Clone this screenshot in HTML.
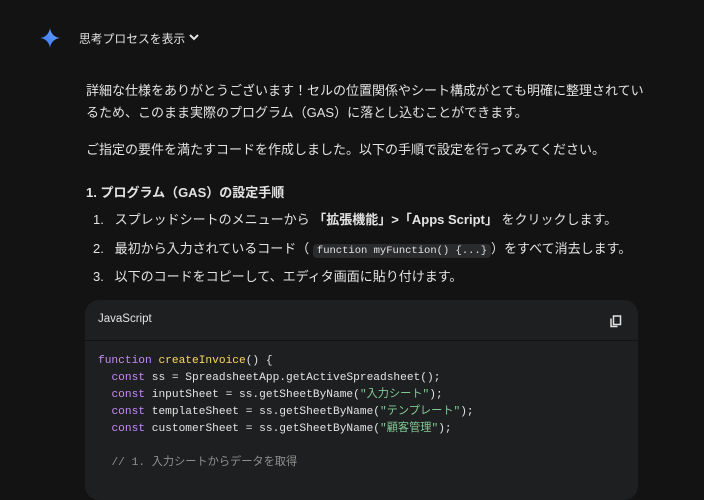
<!DOCTYPE html><html><head><meta charset="utf-8"><style>
body{margin:0;background:#131314;width:704px;height:463px;overflow:hidden;font-family:"Liberation Sans","Noto Sans CJK JP",sans-serif;color:#e3e3e3;position:relative}
.a{position:absolute;white-space:nowrap}
.t{font-size:13px;letter-spacing:0}
code{font-family:"Liberation Mono","Noto Sans CJK JP",monospace}
.ic{background:#2a2b2d;border-radius:4px;padding:1px 4px;font-size:10.5px}
.box{position:absolute;left:85px;top:300px;width:553px;height:200px;background:#1e1f20;border-radius:14px}
.hd{position:absolute;left:85px;top:300px;width:553px;height:40px;border-bottom:1px solid #131314}
pre{margin:0;position:absolute;left:98px;top:353px;font-family:"Liberation Mono","Noto Sans CJK JP",monospace;font-size:11.2px;line-height:17px;color:#e3e3e3}
.k{color:#c58af9}.f{color:#fdd663}.s{color:#81c995}.c{color:#8e918f}
</style></head><body>
<svg class="a" style="left:40px;top:28px" width="20" height="20" viewBox="0 0 20 20"><defs><linearGradient id="g" x1="0" y1="1" x2="1" y2="0"><stop offset="0" stop-color="#2f6ff0"/><stop offset="1" stop-color="#6fa8ff"/></linearGradient></defs><path d="M10 0C10.6 5.5 14.5 9.4 20 10 14.5 10.6 10.6 14.5 10 20 9.4 14.5 5.5 10.6 0 10 5.5 9.4 9.4 5.5 10 0Z" fill="url(#g)"/></svg>
<div class="a" style="left:79px;top:30px;font-size:11.8px;color:#e3e3e3">思考プロセスを表示</div>
<svg class="a" style="left:188px;top:32px" width="12" height="10" viewBox="0 0 12 10"><path d="M2 3l4 4 4-4" stroke="#e3e3e3" stroke-width="2" fill="none"/></svg>
<div class="a t" style="left:86px;top:80px;line-height:22px">詳細な仕様をありがとうございます！セルの位置関係やシート構成がとても明確に整理されてい<br>るため、このまま実際のプログラム（GAS）に落とし込むことができます。</div>
<div class="a t" style="left:86px;top:139px">ご指定の要件を満たすコードを作成しました。以下の手順で設定を行ってみてください。</div>
<div class="a t" style="left:86px;top:182px;font-weight:bold">1. プログラム（GAS）の設定手順</div>
<div class="a t" style="left:93px;top:209px">1.&nbsp;&nbsp;&nbsp;スプレッドシートのメニューから <b>「拡張機能」&gt;「Apps Script」</b> をクリックします。</div>
<div class="a t" style="left:93px;top:238px">2.&nbsp;&nbsp;&nbsp;最初から入力されているコード（ <code class="ic">function myFunction() {...}</code>）をすべて消去します。</div>
<div class="a t" style="left:93px;top:266px">3.&nbsp;&nbsp;&nbsp;以下のコードをコピーして、エディタ画面に貼り付けます。</div>
<div class="box"></div><div class="hd"></div>
<div class="a" style="left:98px;top:313px;font-size:11.5px">JavaScript</div>
<svg class="a" style="left:610px;top:315px" width="12" height="13" viewBox="0 0 12 13"><rect x="3.5" y="1" width="7" height="8.5" fill="none" stroke="#e3e3e3" stroke-width="1.5"/><path d="M1 3.5v8h6.5" fill="none" stroke="#e3e3e3" stroke-width="1.5"/></svg>
<pre><span class="k">function</span> <span class="f">createInvoice</span>() {
  <span class="k">const</span> ss = SpreadsheetApp.getActiveSpreadsheet();
  <span class="k">const</span> inputSheet = ss.getSheetByName(<span class="s">"入力シート"</span>);
  <span class="k">const</span> templateSheet = ss.getSheetByName(<span class="s">"テンプレート"</span>);
  <span class="k">const</span> customerSheet = ss.getSheetByName(<span class="s">"顧客管理"</span>);

  <span class="c">// 1. 入力シートからデータを取得</span></pre>
</body></html>
